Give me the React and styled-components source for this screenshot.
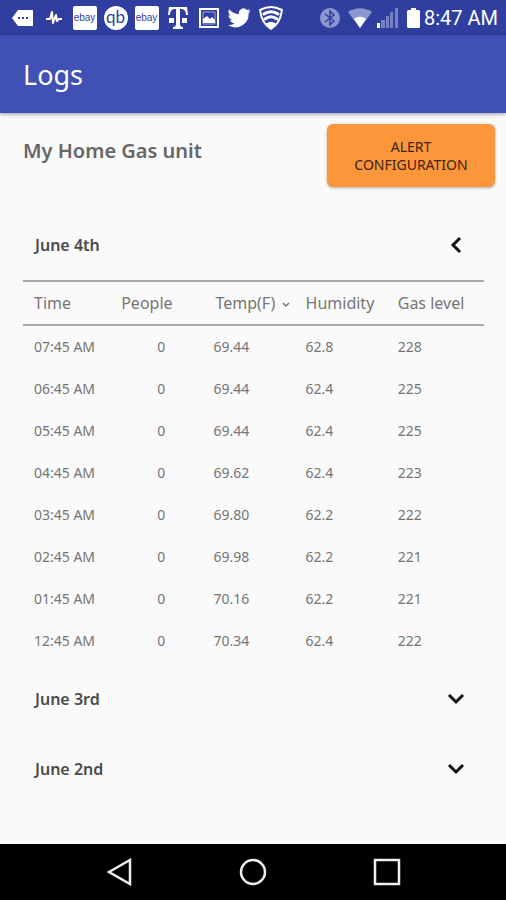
import styled, { createGlobalStyle } from 'styled-components';
import { useState } from 'react'

const days = [
    {
        title: 'June 4th',
        rows: [
            ['07:45 AM', '0', '69.44', '62.8', '228'],
            ['06:45 AM', '0', '69.44', '62.4', '225'],
            ['05:45 AM', '0', '69.44', '62.4', '225'],
            ['04:45 AM', '0', '69.62', '62.4', '223'],
            ['03:45 AM', '0', '69.80', '62.2', '222'],
            ['02:45 AM', '0', '69.98', '62.2', '221'],
            ['01:45 AM', '0', '70.16', '62.2', '221'],
            ['12:45 AM', '0', '70.34', '62.4', '222'],
        ],
    },
    { title: 'June 3rd', rows: [] },
    { title: 'June 2nd', rows: [] },
]

const StatusBar = () => (
    <StatusDetails>
        <div className="notifications">
            <svg width="21" height="16" viewBox="0 0 21 16">
                <path d="M6 0h15v16H6L0 8z" fill="#fff" />
                <path d="M6 7h2v2H6zM10 7h2v2h-2zM14 7h2v2h-2z" fill="#303f9f" />
            </svg>
            <svg width="18" height="16" viewBox="0 0 18 16" fill="none" stroke="#fff" strokeWidth="2" strokeLinejoin="round">
                <path d="M1 9h4l2-7 1 11 3-8 1 6 2-2h3" />
            </svg>
            <Tile>ebay</Tile>
            <Tile $round>qb</Tile>
            <Tile>ebay</Tile>
            <svg width="20" height="22" viewBox="0 0 20 22" fill="#fff">
                <path d="M1 0h18l1 8h-2c0-4-2-6-5-6h-1v15c0 2 1 3 3 3v2H5v-2c2 0 3-1 3-3V2H7C4 2 2 4 2 8H0zM1 11h5v5H1zM14 11h5v5h-5z" />
            </svg>
            <svg width="20" height="20" viewBox="0 0 20 20">
                <path d="M1 1h18v18H1z" fill="none" stroke="#fff" strokeWidth="2" />
                <path d="M4 4h12v12H4z" fill="none" stroke="#9fa8da" strokeWidth="1" />
                <path d="M4 15v-4l4-3 3 3 2-2 3 3v3z" fill="#fff" />
            </svg>
            <svg width="23" height="23" viewBox="0 0 24 24" fill="#fff">
                <path d="M23.6 4.9a9.7 9.7 0 0 1-2.8.8 4.9 4.9 0 0 0 2.1-2.7 9.8 9.8 0 0 1-3.1 1.2 4.9 4.9 0 0 0-8.4 4.5A13.9 13.9 0 0 1 1.3 3.5a4.9 4.9 0 0 0 1.5 6.6 4.9 4.9 0 0 1-2.2-.6 4.9 4.9 0 0 0 3.900 4.900 4.900 4.900 0 0 1-2.200.1 4.900 4.900 0 0 0 4.600 3.400A9.900 9.900 0 0 1 0 19.900a13.900 13.900 0 0 0 21.500-12.500 10 10 0 0 0 2.100-2.500z" />
            </svg>
            <svg width="24" height="24" viewBox="0 0 24 24" fill="none" stroke="#fff" strokeWidth="2" strokeLinejoin="round" strokeLinecap="round">
                <path d="M12 1c4 0 7 1 11 3-1 8-4 15-11 19C5 19 2 12 1 4c4-2 7-3 11-3z" />
                <path d="M5 8c4-3 10-3 14 0M6 13c4-3 8-3 12 0" strokeWidth="3" />
                <path d="M8 18c3-2 5-2 8 0l-4 4z" fill="#fff" />
            </svg>
        </div>
        <div className="system">
            <svg width="26" height="22" viewBox="-2 0 26 22">
                <circle cx="11" cy="11" r="10" fill="#8d97cf" />
                <path d="M6 7l9 7-4 4V4l4 4-9 7" fill="none" stroke="#303f9f" strokeWidth="1.5" />
            </svg>
            <svg width="26" height="20" viewBox="0 0 26 20">
                <path d="M1 4C8-1 18-1 25 4L13 20z" fill="#8d97cf" />
                <path d="M7 11c4-3 8-3 12 0l-6 9z" fill="#fff" />
            </svg>
            <svg width="21" height="20" viewBox="0 0 21 20">
                <path d="M0 15h3v5H0z" fill="#fff" />
                <path d="M4 12h4v8H4zM9 8h3v12H9zM13 4h3v16h-3zM18 0h3v20h-3z" fill="#7581c4" />
            </svg>
            <svg width="18" height="20" viewBox="-5 0 18 20">
                <path d="M4 0h5v2h3l1 1v16l-1 1H1l-1-1V3l1-1h3z" fill="#fff" />
            </svg>
            <time>8:47 AM</time>
        </div>
    </StatusDetails>
)

const Chevron = ({ open }) => (
    <svg width="24" height="24" viewBox="0 0 24 24" fill="none" stroke="#111" strokeWidth="3">
        <path d={open ? 'M16 5l-7 7 7 7' : 'M5 8l7 7 7-7'} />
    </svg>
)

const DayLog = ({ day, open, onToggle }) => (
    <section>
        <DayButton type="button" aria-expanded={open} onClick={onToggle}>
            {day.title}
            <Chevron open={open} />
        </DayButton>
        {open && day.rows.length > 0 ? (
            <LogTable>
                <thead>
                    <tr>
                        <th>Time</th>
                        <th>People</th>
                        <th className="sorted">
                            Temp(F)
                            <svg width="8" height="6" viewBox="0 0 8 6" fill="none" stroke="#777" strokeWidth="1.5">
                                <path d="M1 1l3 3 3-3" />
                            </svg>
                        </th>
                        <th>Humidity</th>
                        <th>Gas level</th>
                    </tr>
                </thead>
                <tbody>
                    {day.rows.map((row) => (
                        <tr key={row[0]}>
                            {row.map((value, i) => <td key={i}>{value}</td>)}
                        </tr>
                    ))}
                </tbody>
            </LogTable>) : null
        }
    </section>
)

const App = () => {
    const [openDay, setOpenDay] = useState('June 4th')

    function handleToggle(title) {
        setOpenDay(openDay === title ? null : title)
    }

    return (
        <Screen>
            <GlobalStyle />
            <StatusBar />
            <AppBar><h1>Logs</h1></AppBar>
            <main>
                <UnitHeader>
                    <h2>My Home Gas unit</h2>
                    <AlertButton type="button">ALERT CONFIGURATION</AlertButton>
                </UnitHeader>
                <LogList>
                    {days.map((day) => (
                        <DayLog
                            key={day.title}
                            day={day}
                            open={openDay === day.title}
                            onToggle={() => handleToggle(day.title)}
                        />
                    ))}
                </LogList>
            </main>
            <NavBar>
                <button type="button" aria-label="Back">
                    <svg width="28" height="28" viewBox="0 0 28 28"><path d="M4 14L25 2v24z" /></svg>
                </button>
                <button type="button" aria-label="Home">
                    <svg width="28" height="28" viewBox="0 0 28 28"><circle cx="14" cy="14" r="12" /></svg>
                </button>
                <button type="button" aria-label="Recent apps">
                    <svg width="28" height="28" viewBox="0 0 28 28"><path d="M2 2h24v24H2z" /></svg>
                </button>
            </NavBar>
        </Screen>
    )
}

export default App

const GlobalStyle = createGlobalStyle`
    * {
        box-sizing: border-box;
    }

    body {
        margin: 0;
        background: #fafafa;
    }

    body, button {
        font-family: 'Noto Sans', sans-serif;
    }
`

const Screen = styled.div`
    min-height: 100vh;
    display: flex;
    flex-direction: column;

    main {
        flex: 1;
    }

    svg {
        display: block;
        flex: none;
    }
`

const StatusDetails = styled.div`
    height: 35px;
    padding: 0 8px 0 7px;
    background: #303f9f;
    color: #fff;
    display: flex;
    align-items: center;
    justify-content: space-between;

    .notifications {
        display: grid;
        grid-template-columns: repeat(9, 31px);
        align-items: center;
        justify-items: center;
    }

    .system {
        display: flex;
        align-items: center;
        gap: 4px;
    }

    time {
        font-family: Roboto, sans-serif;
        font-size: 20px;
        line-height: 24px;
        white-space: nowrap;
    }
`

const Tile = styled.span`
    width: 24px;
    height: 24px;
    border-radius: ${(props) => (props.$round ? '12px' : '2px')};
    background: #fff;
    color: #303f9f;
    display: flex;
    align-items: center;
    justify-content: center;
    font-family: ${(props) => (props.$round ? 'Lato' : "'Liberation Sans'")}, sans-serif;
    font-size: ${(props) => (props.$round ? '17px' : '10px')};
    line-height: 20px;
    padding-bottom: ${(props) => (props.$round ? '2px' : '0')};
`

const AppBar = styled.header`
    height: 78px;
    padding: 2px 23px 0;
    background: #3f51b5;
    color: #fff;
    display: flex;
    align-items: center;
    box-shadow: 0 1px 4px rgba(0, 0, 0, 0.4);

    h1 {
        margin: 0;
        font-size: 27px;
        line-height: 36px;
        font-weight: 400;
    }
`

const UnitHeader = styled.div`
    padding: 11px 11px 23px 23px;
    display: flex;
    justify-content: space-between;
    align-items: center;

    h2 {
        margin: 0;
        padding-bottom: 10px;
        font-size: 20px;
        line-height: 28px;
        font-weight: 600;
        color: #666;
    }
`

const AlertButton = styled.button`
    width: 168px;
    height: 63px;
    padding: 0 20px;
    border: none;
    border-radius: 6px;
    background: #fb963b;
    color: #3b2410;
    font-size: 14px;
    line-height: 18px;
    box-shadow: 0 1px 3px rgba(0, 0, 0, 0.3);
    cursor: pointer;
`

const LogList = styled.div`
    padding: 0 22px 0 23px;
`

const DayButton = styled.button`
    width: 100%;
    height: 70px;
    padding: 0 16px 0 12px;
    border: none;
    background: none;
    color: #4a4a4a;
    display: flex;
    align-items: center;
    justify-content: space-between;
    font-size: 16px;
    line-height: 24px;
    font-weight: 600;
    cursor: pointer;
`

const LogTable = styled.table`
    width: 100%;
    margin-bottom: 2px;
    table-layout: fixed;
    border-spacing: 0;
    color: #757575;

    th, td {
        padding: 0 0 0 6px;
        text-align: left;
        font-weight: 400;
        white-space: nowrap;
    }

    th {
        height: 46px;
        font-size: 16px;
        line-height: 24px;
        border-top: 2px solid #aaa;
        border-bottom: 2px solid #aaa;
    }

    td {
        height: 42px;
        font-size: 14px;
        line-height: 20px;
    }

    th:first-child, td:first-child {
        padding-left: 11px;
    }

    td:nth-child(2) {
        padding: 0;
        text-align: center;
    }

    .sorted {
        padding-left: 8px;
    }

    .sorted svg {
        display: inline-block;
        margin-left: 7px;
        vertical-align: middle;
    }
`

const NavBar = styled.nav`
    height: 56px;
    background: #000;
    display: flex;
    align-items: center;
    justify-content: center;
    gap: 86px;

    button {
        width: 48px;
        height: 48px;
        padding: 0;
        border: none;
        background: none;
        display: flex;
        align-items: center;
        justify-content: center;
        cursor: pointer;
    }

    svg {
        fill: none;
        stroke: #eee;
        stroke-width: 2.5;
    }
`
